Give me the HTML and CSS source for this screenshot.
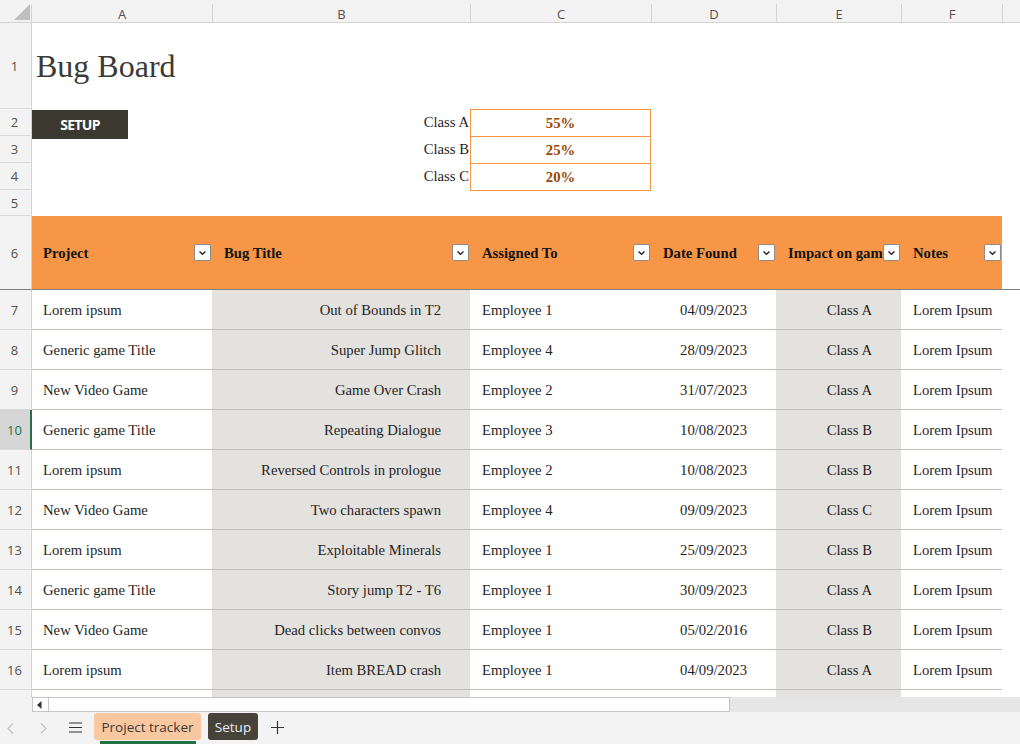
FILE: index.html
```html
<!DOCTYPE html>
<html>
<head>
<meta charset="utf-8">
<link rel="stylesheet" href="styles.css">
</head>
<body>
<div class="app">
  <div class="sheet">
    <div class="colhdr">
      <div class="ch corner"><svg width="16" height="16" viewBox="0 0 16 16"><polygon points="0,16 16,16 16,0" fill="#bfbfbf"/></svg></div>
      <div class="ch w-a">A</div>
      <div class="ch w-b">B</div>
      <div class="ch w-c">C</div>
      <div class="ch w-d">D</div>
      <div class="ch w-e">E</div>
      <div class="ch w-f">F</div>
      <div class="ch w-g"></div>
    </div>
    <div class="grid">
      <!-- row 1 -->
      <div class="rh">1</div>
      <div class="c title-cell"><span class="title">Bug Board</span></div>
      <div class="c"></div><div class="c"></div><div class="c"></div><div class="c"></div><div class="c"></div><div class="c"></div>
      <!-- row 2 -->
      <div class="rh">2</div>
      <div class="c btn-cell"><span class="setup">SETUP</span></div>
      <div class="c lbl">Class A</div>
      <div class="c box">55%</div>
      <div class="c"></div><div class="c"></div><div class="c"></div><div class="c"></div>
      <!-- row 3 -->
      <div class="rh">3</div>
      <div class="c"></div>
      <div class="c lbl">Class B</div>
      <div class="c box">25%</div>
      <div class="c"></div><div class="c"></div><div class="c"></div><div class="c"></div>
      <!-- row 4 -->
      <div class="rh">4</div>
      <div class="c"></div>
      <div class="c lbl">Class C</div>
      <div class="c box">20%</div>
      <div class="c"></div><div class="c"></div><div class="c"></div><div class="c"></div>
      <!-- row 5 -->
      <div class="rh">5</div>
      <div class="c"></div><div class="c"></div>
      <div class="c box-end"></div>
      <div class="c"></div><div class="c"></div><div class="c"></div><div class="c"></div>
      <!-- row 6 header -->
      <div class="rh rh-h">6</div>
      <div class="c h pa"><span class="ht">Project</span><span class="fb"><svg width="9" height="6" viewBox="0 0 9 6"><path d="M1.5 1.5 L4.5 4.3 L7.5 1.5" fill="none" stroke="#222" stroke-width="1.3"/></svg></span></div>
      <div class="c h"><span class="ht">Bug Title</span><span class="fb"><svg width="9" height="6" viewBox="0 0 9 6"><path d="M1.5 1.5 L4.5 4.3 L7.5 1.5" fill="none" stroke="#222" stroke-width="1.3"/></svg></span></div>
      <div class="c h"><span class="ht">Assigned To</span><span class="fb"><svg width="9" height="6" viewBox="0 0 9 6"><path d="M1.5 1.5 L4.5 4.3 L7.5 1.5" fill="none" stroke="#222" stroke-width="1.3"/></svg></span></div>
      <div class="c h"><span class="ht">Date Found</span><span class="fb"><svg width="9" height="6" viewBox="0 0 9 6"><path d="M1.5 1.5 L4.5 4.3 L7.5 1.5" fill="none" stroke="#222" stroke-width="1.3"/></svg></span></div>
      <div class="c h"><span class="ht">Impact on game</span><span class="fb"><svg width="9" height="6" viewBox="0 0 9 6"><path d="M1.5 1.5 L4.5 4.3 L7.5 1.5" fill="none" stroke="#222" stroke-width="1.3"/></svg></span></div>
      <div class="c h"><span class="ht">Notes</span><span class="fb"><svg width="9" height="6" viewBox="0 0 9 6"><path d="M1.5 1.5 L4.5 4.3 L7.5 1.5" fill="none" stroke="#222" stroke-width="1.3"/></svg></span></div>
      <div class="c h-g"></div>
      <!-- row 7 -->
      <div class="rh">7</div>
      <div class="c d pa">Lorem ipsum</div><div class="c d g r">Out of Bounds in T2</div><div class="c d">Employee 1</div><div class="c d r">04/09/2023</div><div class="c d g r">Class A</div><div class="c d">Lorem Ipsum</div><div class="c"></div>
      <!-- row 8 -->
      <div class="rh">8</div>
      <div class="c d pa">Generic game Title</div><div class="c d g r">Super Jump Glitch</div><div class="c d">Employee 4</div><div class="c d r">28/09/2023</div><div class="c d g r">Class A</div><div class="c d">Lorem Ipsum</div><div class="c"></div>
      <!-- row 9 -->
      <div class="rh">9</div>
      <div class="c d pa">New Video Game</div><div class="c d g r">Game Over Crash</div><div class="c d">Employee 2</div><div class="c d r">31/07/2023</div><div class="c d g r">Class A</div><div class="c d">Lorem Ipsum</div><div class="c"></div>
      <!-- row 10 -->
      <div class="rh sel">10</div>
      <div class="c d pa">Generic game Title</div><div class="c d g r">Repeating Dialogue</div><div class="c d">Employee 3</div><div class="c d r">10/08/2023</div><div class="c d g r">Class B</div><div class="c d">Lorem Ipsum</div><div class="c"></div>
      <!-- row 11 -->
      <div class="rh">11</div>
      <div class="c d pa">Lorem ipsum</div><div class="c d g r">Reversed Controls in prologue</div><div class="c d">Employee 2</div><div class="c d r">10/08/2023</div><div class="c d g r">Class B</div><div class="c d">Lorem Ipsum</div><div class="c"></div>
      <!-- row 12 -->
      <div class="rh">12</div>
      <div class="c d pa">New Video Game</div><div class="c d g r">Two characters spawn</div><div class="c d">Employee 4</div><div class="c d r">09/09/2023</div><div class="c d g r">Class C</div><div class="c d">Lorem Ipsum</div><div class="c"></div>
      <!-- row 13 -->
      <div class="rh">13</div>
      <div class="c d pa">Lorem ipsum</div><div class="c d g r">Exploitable Minerals</div><div class="c d">Employee 1</div><div class="c d r">25/09/2023</div><div class="c d g r">Class B</div><div class="c d">Lorem Ipsum</div><div class="c"></div>
      <!-- row 14 -->
      <div class="rh">14</div>
      <div class="c d pa">Generic game Title</div><div class="c d g r">Story jump T2 - T6</div><div class="c d">Employee 1</div><div class="c d r">30/09/2023</div><div class="c d g r">Class A</div><div class="c d">Lorem Ipsum</div><div class="c"></div>
      <!-- row 15 -->
      <div class="rh">15</div>
      <div class="c d pa">New Video Game</div><div class="c d g r">Dead clicks between convos</div><div class="c d">Employee 1</div><div class="c d r">05/02/2016</div><div class="c d g r">Class B</div><div class="c d">Lorem Ipsum</div><div class="c"></div>
      <!-- row 16 -->
      <div class="rh">16</div>
      <div class="c d pa">Lorem ipsum</div><div class="c d g r">Item BREAD crash</div><div class="c d">Employee 1</div><div class="c d r">04/09/2023</div><div class="c d g r">Class A</div><div class="c d">Lorem Ipsum</div><div class="c"></div>
      <!-- row 17 (only its top edge shows) -->
      <div class="rh"></div>
      <div class="c d pa"></div><div class="c d g r"></div><div class="c d"></div><div class="c d r"></div><div class="c d g r"></div><div class="c d"></div><div class="c"></div>
    </div>
  </div>

  <div class="hscroll">
    <div class="hs-pad"></div>
    <div class="hs-btn"><svg width="5" height="8" viewBox="0 0 5 8"><polygon points="4.5,0 4.5,8 0,4" fill="#333"/></svg></div>
    <div class="hs-thumb"></div>
    <div class="hs-track"></div>
  </div>

  <div class="tabbar">
    <svg class="nav prev" width="7" height="11" viewBox="0 0 7 11"><path d="M6 0.5 L1 5.5 L6 10.5" fill="none" stroke="#c2c2c2" stroke-width="1.2"/></svg>
    <svg class="nav next" width="7" height="11" viewBox="0 0 7 11"><path d="M1 0.5 L6 5.5 L1 10.5" fill="none" stroke="#c2c2c2" stroke-width="1.2"/></svg>
    <svg class="ham" width="13" height="11" viewBox="0 0 13 11"><path d="M0 1 H13 M0 5.5 H13 M0 10 H13" stroke="#333" stroke-width="1.2"/></svg>
    <div class="tabwrap">
      <div class="tab tab-active">Project tracker</div>
      <div class="tab-line"></div>
    </div>
    <div class="tab tab-dark">Setup</div>
    <svg class="plus" width="13" height="13" viewBox="0 0 13 13"><path d="M6.5 0 V13 M0 6.5 H13" stroke="#333" stroke-width="1.2"/></svg>
  </div>
</div>
</body>
</html>
```

FILE: styles.css
```css
* { box-sizing: border-box; margin: 0; padding: 0; }
body { margin: 0; background: #fff; font-family: "Liberation Serif", "Times New Roman", serif; }

.app {
  width: 1020px;
  height: 744px;
  overflow: hidden;
  display: flex;
  flex-direction: column;
  background: #f3f3f3;
}

.sheet {
  flex: none;
  height: 697px;
  overflow: hidden;
  background: #fff;
}

/* column header */
.colhdr {
  display: flex;
  height: 23px;
  background: #f3f3f3;
  border-bottom: 1px solid #d4d4d4;
}
.ch {
  flex: none;
  margin-top: 4px;
  height: 18px;
  padding-top: 1px;
  display: flex;
  align-items: center;
  justify-content: center;
  font: 13px "Open Sans", sans-serif;
  color: #505050;
  border-left: 1px solid #d4d4d4;
}
.corner {
  width: 32px;
  border-left: 0;
  border-right: 1px solid #d4d4d4;
  padding: 0 1px 0 0;
  align-items: flex-start;
  justify-content: flex-end;
}
.w-a { width: 180px; border-left: 0; }
.w-b { width: 258px; }
.w-c { width: 181px; }
.w-d { width: 125px; }
.w-e { width: 125px; }
.w-f { width: 101px; }
.w-g { width: 40px; }

/* grid */
.grid {
  display: grid;
  grid-template-columns: 32px 180px 258px 181px 125px 125px 101px 18px;
  grid-template-rows: 86px 27px 27px 27px 26px 74px repeat(11, 40px);
  font-size: 14.7px;
  color: #1f1f1f;
}

.rh {
  background: #f3f3f3;
  border-right: 1px solid #d4d4d4;
  border-bottom: 1px solid #dadada;
  display: flex;
  align-items: center;
  justify-content: center;
  font: 13px "Open Sans", sans-serif;
  color: #505050;
  padding-right: 2px;
}
.rh-h { border-bottom-color: #808080; }
.rh.sel {
  background: #d6d6d6;
  color: #217346;
  border-right: 2px solid #217346;
  padding-right: 1px;
}

.c {
  display: flex;
  align-items: center;
  min-width: 0;
  white-space: nowrap;
  padding-left: 12px;
}
.c.pa { padding-left: 11px; }

.title-cell { overflow: visible; padding-left: 4px; padding-top: 1px; }
.title {
  font-family: "Liberation Serif", serif;
  font-size: 32px;
  color: #3b3a36;
}

.btn-cell { padding-left: 0; align-items: flex-start; overflow: visible; }
.setup {
  margin-top: 1px;
  width: 96px;
  height: 29px;
  flex: none;
  background: #3b3830;
  color: #fff;
  display: flex;
  align-items: center;
  justify-content: center;
  font: bold 14px "Open Sans", sans-serif;
  letter-spacing: -0.7px;
}

.lbl { justify-content: flex-end; padding: 0 1px 0 0; color: #1f1f1f; }
.box {
  justify-content: center;
  padding: 0;
  border: 1px solid #f79646;
  border-bottom: 0;
  font-weight: bold;
  color: #974706;
}
.box-end { border-top: 1px solid #f79646; }

/* table header */
.h {
  background: #f79646;
  border-bottom: 1px solid #808080;
  justify-content: space-between;
  padding-right: 1px;
  font-weight: bold;
  color: #141414;
}
.h-g { border-bottom: 1px solid #808080; }
.ht {
  flex: 1;
  min-width: 0;
  overflow: hidden;
  white-space: nowrap;
  padding-top: 2px;
}
.fb {
  flex: none;
  width: 17px;
  height: 17px;
  background: #fff;
  border: 1px solid #8c8c8c;
  border-radius: 2px;
  display: flex;
  align-items: center;
  justify-content: center;
}

/* data rows */
.d {
  border-bottom: 1px solid #bebdb6;
  overflow: hidden;
  padding-top: 2px;
}
.g { background: #e3e2df; }
.r { justify-content: flex-end; padding-left: 0; padding-right: 29px; }

/* horizontal scrollbar */
.hscroll {
  flex: none;
  display: flex;
  height: 15px;
  background: #f3f3f3;
}
.hs-pad { width: 32px; flex: none; }
.hs-btn {
  width: 17px;
  flex: none;
  background: #fff;
  border: 1px solid #c6c6c6;
  display: flex;
  align-items: center;
  justify-content: center;
  padding-right: 2px;
}
.hs-thumb {
  width: 681px;
  flex: none;
  background: #fff;
  border: 1px solid #c6c6c6;
  border-left: 0;
}
.hs-track { flex: 1; background: #e6e6e6; }

/* tab bar */
.tabbar {
  flex: none;
  height: 32px;
  display: flex;
  align-items: flex-start;
  padding-left: 7px;
  background: #f3f3f3;
  font-family: "Open Sans", sans-serif;
}
.nav { flex: none; margin-top: 11px; }
.next { margin-left: 26px; }
.ham { flex: none; margin-left: 22px; margin-top: 10px; }
.tabwrap {
  margin-left: 12px;
  display: flex;
  flex-direction: column;
  margin-top: 1px;
}
.tab {
  height: 27px;
  border-radius: 3px;
  display: flex;
  align-items: center;
  justify-content: center;
  font-size: 13.5px;
  padding-top: 1px;
}
.tab-active {
  width: 107px;
  background: #f9c8a0;
  color: #3a3a3a;
}
.tab-line {
  height: 3px;
  margin: 1px 5px 0 6px;
  background: #217346;
}
.tab-dark {
  width: 50px;
  margin-left: 7px;
  margin-top: 1px;
  background: #47433a;
  color: #e8eef6;
}
.plus { flex: none; margin-left: 13px; margin-top: 9px; }
```
